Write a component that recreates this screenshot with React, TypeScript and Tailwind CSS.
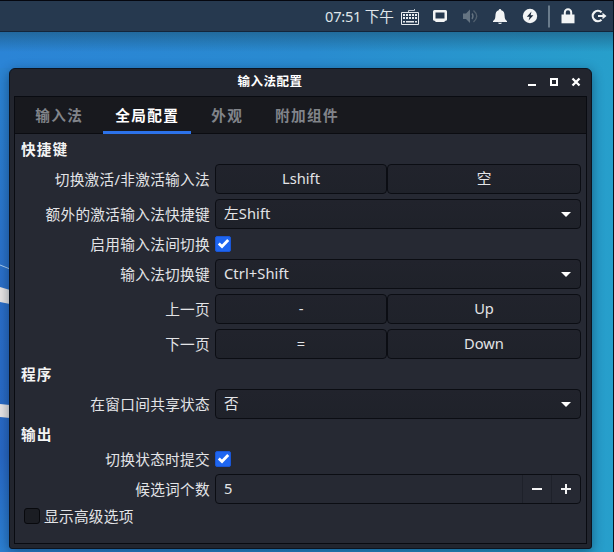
import React from 'react';

const tabs = ['输入法', '全局配置', '外观', '附加组件'];

const buttonClass =
  'flex h-[30px] items-center justify-center rounded-[4px] border border-[#0b0d13] bg-linear-to-b from-[#21232c] to-[#1f222a] pb-0.5';

function Wallpaper() {
  return (
    <svg className="absolute inset-0 h-full w-full" viewBox="0 0 614 552" preserveAspectRatio="none">
      <defs>
        <linearGradient id="sky" x1="0" y1="0" x2="1" y2="0">
          <stop offset="0" stopColor="#2b84d6" />
          <stop offset="0.5" stopColor="#298bd0" />
          <stop offset="1" stopColor="#279fcb" />
        </linearGradient>
        <linearGradient id="side" x1="0" y1="0" x2="0" y2="1">
          <stop offset="0" stopColor="#2b84d2" />
          <stop offset="0.45" stopColor="#2a6fc8" />
          <stop offset="0.8" stopColor="#2868c4" />
          <stop offset="1" stopColor="#2c80d2" />
        </linearGradient>
        <linearGradient id="shade" x1="0" y1="0" x2="0" y2="1">
          <stop offset="0" stopColor="#1c5578" stopOpacity="0.6" />
          <stop offset="1" stopColor="#1c5578" stopOpacity="0" />
        </linearGradient>
      </defs>
      <rect width="614" height="552" fill="url(#sky)" />
      <rect y="68" width="12" height="484" fill="url(#side)" />
      <rect y="32" width="614" height="20" fill="url(#shade)" />
      <path d="M0 265 L10 269" stroke="#a9cdf0" strokeWidth="1" />
      <path d="M0 287 L10 290 V304 L0 302 Z" fill="#e6e4e4" />
      <path d="M0 404 L10 405 V418 L0 417 Z" fill="#e6e4e4" />
    </svg>
  );
}

function Panel() {
  return (
    <header className="relative h-8 border-t border-b border-t-[#05070f] border-b-[#14253a] bg-[#26394f]">
      <svg className="absolute top-0 right-0" width="220" height="30" viewBox="394 1 220 30" fill="none">
        {/* keyboard */}
        <g stroke="#e6eaee">
          <path d="M401.500 12.500H418.500V24.500H401.500Z" />
          <path d="M408.500 12V10.500H414.500V9" strokeWidth="0.800" />
          <path d="M403 15H417M403 18H417" strokeWidth="1.800" strokeDasharray="2 1" />
          <path d="M403 21.800H405M406 21.800H414M415 21.800H417" strokeWidth="1.600" />
        </g>
        {/* display */}
        <path
          fillRule="evenodd"
          d="M434.500 10H445.500Q447 10 447 11.500V19.500Q447 20.700 445.500 20.700L444 22H436L434.500 20.700Q433 20.700 433 19.500V11.500Q433 10 434.500 10ZM435.500 12.500V18.500H444.500V12.500Z"
          fill="#f2f4f5"
        />
        {/* muted volume */}
        <path d="M463 13.500H466L470 9.500V23L466 19H463Z" fill="#657482" />
        <path d="M472 13.500Q474 16.200 472 19" stroke="#657482" strokeWidth="1.300" />
        <path d="M473.500 10.500Q480 16.200 473.500 22" stroke="#52616f" strokeWidth="1.400" />
        {/* bell */}
        <path
          d="M500 9Q501.200 9 501.300 10.300C504 11 504.500 13 504.600 16C504.700 19 505.600 19.800 507 21V22H493V21C494.400 19.800 495.300 19 495.400 16C495.500 13 496 11 498.700 10.300Q498.800 9 500 9Z"
          fill="#f2f4f5"
        />
        <path d="M498 22.700H502Q501.500 24 500 24Q498.500 24 498 22.700Z" fill="#f2f4f5" />
        {/* power */}
        <circle cx="530" cy="16" r="7.200" fill="#f2f4f5" />
        <path d="M531.500 11.500L526.800 16.800H529.600L528.600 20.500L533.400 15.200H530.600Z" fill="#1c2a3c" />
        <path d="M549 5.500V27.500" stroke="#8293a0" strokeWidth="1.500" />
        {/* lock */}
        <path d="M561.500 14.500H574.500V23.300H561.500Z" fill="#f2f4f5" />
        <path d="M564.800 15V12.500A3.200 3.200 0 0 1 571.200 12.500V15" stroke="#f2f4f5" strokeWidth="2" />
        {/* log out */}
        <path d="M601.500 12.200A5.200 5.200 0 1 0 601.500 19.800" stroke="#f2f4f5" strokeWidth="2.200" />
        <path d="M598 15H602.500V12.800L606.500 16L602.500 19.200V17H598Z" fill="#f2f4f5" />
      </svg>
      <div className="flex h-full items-center pl-[325px] text-[14.67px] tracking-[-0.25px] whitespace-nowrap text-[#dfe5ea]">
        07:51 下午
      </div>
    </header>
  );
}

function Row({ label, children }: { label: string; children: React.ReactNode }) {
  return (
    <div className="flex items-center gap-[5px]">
      <div className="w-[190px] shrink-0 text-right leading-5 tracking-[0.3px] whitespace-nowrap">{label}</div>
      <div className="flex-1">{children}</div>
    </div>
  );
}

function Heading({ children }: { children: React.ReactNode }) {
  return <h2 className="h-5 pl-px leading-5 font-bold tracking-[1.1px] text-[#f3f3f4]">{children}</h2>;
}

function KeyPair({ first, second }: { first: string; second: string }) {
  return (
    <div className="flex">
      <button className={`${buttonClass} w-[172px]`}>{first}</button>
      <button className={`${buttonClass} flex-1`}>{second}</button>
    </div>
  );
}

function Select({ value }: { value: string }) {
  return (
    <div className="flex h-[30px] items-center justify-between rounded-[4px] border border-[#0b0d13] bg-linear-to-b from-[#21232c] to-[#1f222a] pr-[9px] pl-2">
      <span className="pb-0.5 tracking-[0.1px]">{value}</span>
      <svg width="10" height="5" viewBox="0 0 10 5">
        <path d="M0 0H10L5 5Z" fill="#fff" />
      </svg>
    </div>
  );
}

function Check() {
  return (
    <div className="flex h-5 items-center">
      <svg width="16" height="16" viewBox="0 0 16 16">
        <rect x="0.500" y="0.500" width="15" height="15" rx="1.500" fill="#1f66f0" stroke="#1a56d6" />
        <path d="M3.800 7.500L7 10.500L13.200 4" fill="none" stroke="#fff" strokeWidth="2.800" />
      </svg>
    </div>
  );
}

export default function App() {
  return (
    <div className="relative h-[552px] w-[614px] overflow-hidden font-['Noto_Sans','Noto_Sans_CJK_SC',sans-serif] text-[14.67px] text-[#e3e4e7]">
      <Wallpaper />
      <Panel />

      <div className="absolute top-[68px] left-[9px] flex h-[481px] w-[583px] flex-col rounded-t-[6px] rounded-b-[3px] border border-[#0c1420] bg-[#22252e] px-1 pb-1 shadow-[0_3px_12px_rgba(0,20,40,0.45)]">
        <div className="relative flex h-[27px] shrink-0 items-center">
          <h1 className="w-full pr-[61px] text-center text-[12.5px] font-bold tracking-[0.5px] text-white">输入法配置</h1>
          <svg className="absolute top-[7px] right-[6px]" width="54" height="12" viewBox="0 0 54 12">
            <path d="M1 9H9" stroke="#fff" strokeWidth="2" />
            <path d="M24 3H30V9H24Z" fill="none" stroke="#fff" strokeWidth="2" />
            <path d="M45.500 2.500L52.500 9.500M52.500 2.500L45.500 9.500" stroke="#fff" strokeWidth="2.300" />
          </svg>
        </div>

        <div className="flex flex-1 flex-col border border-[#090b11] bg-[#262933]">
          <nav className="flex h-[37px] shrink-0 gap-2 border-b border-[#0b0c11] bg-[#18191e] pl-2">
            {tabs.map((tab, index) => (
              <div
                key={tab}
                className={`relative flex items-center pr-[11.6px] pl-[12.3px] font-bold tracking-[1.35px] ${index === 1 ? 'text-white' : 'text-[#81848a]'}`}
              >
                {tab}
                {index === 1 && <span className="absolute inset-x-0 -bottom-px h-[3px] bg-[#2c72ea]" />}
              </div>
            ))}
          </nav>

          <div className="flex flex-col gap-[5px] pt-[5px] pr-[5px] pl-[5px]">
            <Heading>快捷键</Heading>
            <Row label="切换激活/非激活输入法">
              <KeyPair first="Lshift" second="空" />
            </Row>
            <Row label="额外的激活输入法快捷键">
              <Select value="左Shift" />
            </Row>
            <Row label="启用输入法间切换">
              <Check />
            </Row>
            <Row label="输入法切换键">
              <Select value="Ctrl+Shift" />
            </Row>
            <Row label="上一页">
              <KeyPair first="-" second="Up" />
            </Row>
            <Row label="下一页">
              <KeyPair first="=" second="Down" />
            </Row>
            <Heading>程序</Heading>
            <Row label="在窗口间共享状态">
              <Select value="否" />
            </Row>
            <Heading>输出</Heading>
            <Row label="切换状态时提交">
              <Check />
            </Row>
            <Row label="候选词个数">
              <div className="flex h-[30px] items-center rounded-[4px] border border-[#0b0d13] bg-[#262933]">
                <span className="flex-1 pb-0.5 pl-2">5</span>
                <span className="flex h-full w-[29px] items-center justify-center border-l border-[#1e212a]">
                  <svg width="12" height="12" viewBox="0 0 12 12">
                    <path d="M1 6H11" stroke="#f4f4f5" strokeWidth="2" />
                  </svg>
                </span>
                <span className="flex h-full w-[29px] items-center justify-center border-l border-[#1e212a]">
                  <svg width="12" height="12" viewBox="0 0 12 12">
                    <path d="M1 6H11M6 1V11" stroke="#f4f4f5" strokeWidth="2" />
                  </svg>
                </span>
              </div>
            </Row>
          </div>

          <div className="mt-[2px] flex h-5 items-center gap-1 pl-[9px]">
            <span className="h-4 w-4 rounded-[3px] border border-[#08090d] bg-[#1b1d23]" />
            <span className="tracking-[0.3px]">显示高级选项</span>
          </div>
        </div>
      </div>
      <div className="absolute inset-y-0 right-0 w-px bg-[#07111d]" />
    </div>
  );
}
